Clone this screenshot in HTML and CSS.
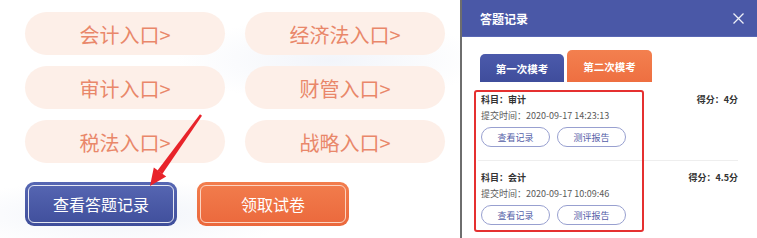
FILE: index.html
```html
<!DOCTYPE html>
<html lang="zh-CN">
<head>
<meta charset="utf-8">
<title>答题记录</title>
<link rel="stylesheet" href="styles.css">
</head>
<body>
<div class="left">
  <div class="grid">
    <div class="pill">会计入口&gt;</div>
    <div class="pill">经济法入口&gt;</div>
    <div class="pill">审计入口&gt;</div>
    <div class="pill">财管入口&gt;</div>
    <div class="pill">税法入口&gt;</div>
    <div class="pill">战略入口&gt;</div>
  </div>
  <div class="actions">
    <div class="btn btn-blue"><span class="btn-inner">查看答题记录</span></div>
    <div class="btn btn-orange"><span class="btn-inner">领取试卷</span></div>
  </div>
  <svg class="arrow" width="460" height="238" viewBox="0 0 460 238">
    <polygon fill="#e8232a" points="202.0,115.8 200.0,114.2 157.5,170.4 162.3,174.0"/>
    <polygon fill="#e8232a" points="150,186 153.8,167.6 166.2,176.6"/>
  </svg>
</div>
<div class="panel">
  <div class="panel-head">
    <span class="panel-title">答题记录</span>
    <svg class="close" width="11" height="11" viewBox="0 0 11 11">
      <path d="M0.5 0.5 L10.5 10.5 M10.5 0.5 L0.5 10.5" stroke="#eef0f8" stroke-width="1.3" fill="none"/>
    </svg>
  </div>
  <div class="tabs">
    <div class="tab tab-blue">第一次模考</div>
    <div class="tab tab-orange">第二次模考</div>
  </div>
  <div class="records">
    <div class="record">
      <div class="rec-main">
        <div class="rec-title">科目：审计</div>
        <div class="rec-time">提交时间：2020-09-17 14:23:13</div>
        <div class="rec-btns">
          <span class="rbtn">查看记录</span>
          <span class="rbtn">测评报告</span>
        </div>
      </div>
      <div class="score">得分：4分</div>
    </div>
    <div class="record last">
      <div class="rec-main">
        <div class="rec-title">科目：会计</div>
        <div class="rec-time">提交时间：2020-09-17 10:09:46</div>
        <div class="rec-btns">
          <span class="rbtn">查看记录</span>
          <span class="rbtn">测评报告</span>
        </div>
      </div>
      <div class="score">得分：4.5分</div>
    </div>
  </div>
  <div class="mark"></div>
</div>
</body>
</html>
```
FILE: styles.css
```css
html, body {
  margin: 0;
  padding: 0;
}
body {
  width: 757px;
  height: 238px;
  overflow: hidden;
  display: flex;
  font-family: "Noto Sans CJK SC", "Microsoft YaHei", sans-serif;
  background: #ffffff;
}
.left {
  position: relative;
  width: 460px;
  height: 238px;
  box-sizing: border-box;
  padding: 12px 0 0 25px;
  background:
    radial-gradient(ellipse 220px 60px at 330px 60px, rgba(226, 232, 244, 0.45), rgba(255,255,255,0) 70%),
    radial-gradient(ellipse 260px 50px at 120px 215px, rgba(226, 232, 244, 0.5), rgba(255,255,255,0) 70%),
    #ffffff;
}
.grid {
  display: grid;
  grid-template-columns: 200px 200px;
  column-gap: 20px;
  row-gap: 11px;
}
.pill {
  height: 43px;
  border-radius: 22px;
  background: #fdefe8;
  color: #e9876a;
  font-size: 20px;
  display: flex;
  align-items: center;
  justify-content: center;
  padding-top: 2px;
  box-sizing: border-box;
}
.actions {
  display: flex;
  gap: 20px;
  margin-top: 19px;
}
.btn {
  width: 152px;
  height: 44px;
  box-sizing: border-box;
  padding: 3px;
  border-radius: 9px;
}
.btn-blue {
  background: linear-gradient(#5767b3, #3f4e9b);
}
.btn-orange {
  background: linear-gradient(#f27d4d, #eb683c);
}
.btn-inner {
  display: flex;
  align-items: center;
  justify-content: center;
  height: 100%;
  box-sizing: border-box;
  border-radius: 6px;
  color: #ffffff;
  font-size: 16px;
}
.btn-blue .btn-inner {
  border: 1px solid rgba(255, 255, 255, 0.85);
}
.btn-orange .btn-inner {
  border: 1px solid #fcd3c0;
}
.arrow {
  position: absolute;
  left: 0;
  top: 0;
  pointer-events: none;
}
.panel {
  position: relative;
  width: 297px;
  height: 238px;
  box-sizing: border-box;
  border-left: 2px solid #6e6e6e;
  background: #ffffff;
}
.panel-head {
  height: 37px;
  background: #4a58a7;
  display: flex;
  align-items: center;
  justify-content: space-between;
  padding: 0 13px 0 18px;
  border-bottom: 1px solid #5a68b4;
  box-sizing: border-box;
}
.panel-title {
  color: #ffffff;
  font-size: 12px;
  font-weight: 700;
}
.close {
  display: block;
}
.tabs {
  display: flex;
  align-items: flex-end;
  gap: 3px;
  padding: 13px 0 0 18px;
}
.tab {
  display: flex;
  align-items: center;
  justify-content: center;
  color: #ffffff;
  font-size: 10.5px;
  font-weight: 700;
  border-radius: 5px 5px 0 0;
}
.tab-blue {
  width: 84px;
  height: 28px;
  background: linear-gradient(#4b5aab, #3f4d9c);
}
.tab-orange {
  width: 85px;
  height: 32px;
  background: linear-gradient(#f3804f, #ee6f41);
}
.records {
  margin: 1px 19px 0 16px;
}
.record {
  display: flex;
  justify-content: space-between;
  padding: 9px 0 13px 3px;
  border-bottom: 1px solid #eeeeee;
}
.record.last {
  border-bottom: none;
}
.rec-title {
  font-size: 9px;
  font-weight: 700;
  color: #333333;
  line-height: 16px;
}
.rec-time {
  font-size: 9px;
  color: #5a5a5a;
  line-height: 16px;
}
.rec-btns {
  display: flex;
  gap: 7px;
  margin-top: 3px;
}
.rbtn {
  width: 69px;
  height: 20px;
  box-sizing: border-box;
  border: 1px solid #98a0d0;
  border-radius: 10px;
  color: #5560a8;
  font-size: 9px;
  display: flex;
  align-items: center;
  justify-content: center;
}
.score {
  font-size: 9px;
  font-weight: 700;
  color: #333333;
  line-height: 16px;
}
.mark {
  position: absolute;
  left: 12px;
  top: 90px;
  width: 170px;
  height: 142px;
  box-sizing: border-box;
  border: 2px solid #e53030;
  border-radius: 3px;
  pointer-events: none;
}
```
